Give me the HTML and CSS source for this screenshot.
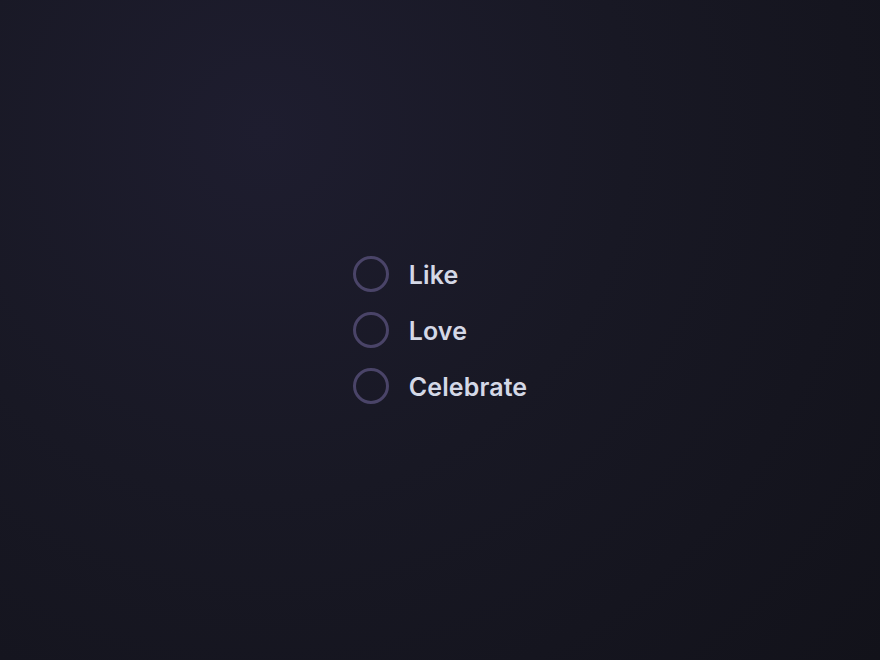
FILE: index.html
```html
<!DOCTYPE html>
<html lang="en">
<head>
<meta charset="utf-8">
<title>Reactions</title>
<link rel="stylesheet" href="styles.css">
</head>
<body>
<main class="stage">
  <ul class="options">
    <li class="option"><span class="radio"></span><span class="label">Like</span></li>
    <li class="option"><span class="radio"></span><span class="label">Love</span></li>
    <li class="option"><span class="radio"></span><span class="label">Celebrate</span></li>
  </ul>
</main>
</body>
</html>
```
FILE: styles.css
```css
html, body {
  margin: 0;
  padding: 0;
  height: 100%;
}
body {
  background: radial-gradient(circle at 30% 20%, #1e1d2f 0%, #181824 45%, #12121a 100%);
  font-family: Inter, "Noto Sans", sans-serif;
}
.stage {
  height: 100%;
  display: flex;
  align-items: center;
  justify-content: center;
}
.options {
  list-style: none;
  margin: 0;
  padding: 0;
  display: flex;
  flex-direction: column;
  gap: 20px;
}
.option {
  display: flex;
  align-items: center;
  gap: 20px;
  height: 36px;
}
.radio {
  box-sizing: border-box;
  width: 36px;
  height: 36px;
  border-radius: 50%;
  border: 3px solid #4a4468;
}
.label {
  color: #d4d8e6;
  font-size: 25px;
  font-weight: 600;
  line-height: 1;
  padding-top: 3px;
  letter-spacing: 0.1px;
}
```
